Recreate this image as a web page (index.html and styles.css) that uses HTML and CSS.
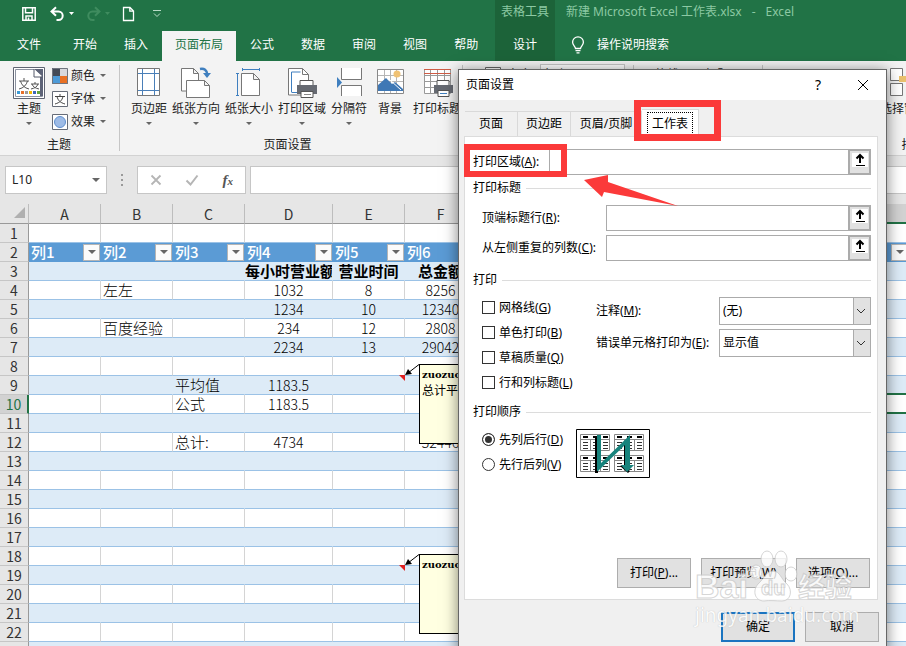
FILE: index.html
```html
<!DOCTYPE html>
<html lang="zh-CN">
<head>
    <meta charset="UTF-8">
    <meta name="viewport" content="width=device-width, initial-scale=1.0">
    <title>新建 Microsoft Excel 工作表.xlsx - Excel</title>
    <link rel="stylesheet" href="styles.css">
</head>
<body>
    <header class="header">
        <div class="header-left">
            <div class="quick-access">
                <button class="qa-btn" aria-label="保存"><svg width="16" height="16" viewBox="0 0 16 16" fill="none" stroke="#fff" stroke-width="1.5"><path d="M1.8 1.8h12.4v12.4H1.8zM4.5 2v4.7h7V2M5 14v-4h6v4M7.5 11.5V14"/></svg></button>
                <button class="qa-btn undo" aria-label="撤消"><svg width="26" height="16" viewBox="0 0 26 16"><path d="M3 5.5h6.5a4.2 4.2 0 0 1 0 8.4H7.5M7 1.2L2.5 5.5 7 9.8" fill="none" stroke="#fff" stroke-width="2"/><path d="M20 6h5l-2.5 3z" fill="#fff"/></svg></button>
                <button class="qa-btn redo" aria-label="恢复"><svg width="26" height="16" viewBox="0 0 26 16"><path d="M14 5.5H7.5a4.2 4.2 0 0 0 0 8.4H9.5M10 1.2l4.5 4.3L10 9.8" fill="none" stroke="#3f8c5f" stroke-width="2"/><path d="M20 6h5l-2.5 3z" fill="#3f8c5f"/></svg></button>
                <button class="qa-btn new-file" aria-label="新建"><svg width="13" height="16" viewBox="0 0 13 16" fill="none" stroke="#fff" stroke-width="1.3"><path d="M1.5 1.5h6.5l3.5 3.5v9.5h-10zM7.8 1.5V5.2h3.7"/></svg></button>
                <button class="qa-btn customize" aria-label="自定义快速访问工具栏"><svg width="10" height="8" viewBox="0 0 10 8" fill="none" stroke="#b9dcc7"><path d="M1 .5h8M2 3.5l3 3 3-3"/></svg></button>
            </div>
            <nav class="tabs">
                <button class="tab file">文件</button>
                <button class="tab">开始</button>
                <button class="tab">插入</button>
                <button class="tab active">页面布局</button>
                <button class="tab">公式</button>
                <button class="tab">数据</button>
                <button class="tab">审阅</button>
                <button class="tab">视图</button>
                <button class="tab">帮助</button>
            </nav>
        </div>
        <div class="context-tools">
            <div class="context-title">表格工具</div>
            <button class="tab">设计</button>
        </div>
        <div class="header-right">
            <div class="doc-title"><span>新建 Microsoft Excel 工作表.xlsx</span><span>-</span><span>Excel</span></div>
            <button class="tell-me"><svg width="14" height="18" viewBox="0 0 14 18" fill="none" stroke="#fff" stroke-width="1.3"><path d="M4.5 12.5c0-2-2.9-3.2-2.9-6.3a5.4 5.4 0 0 1 10.8 0c0 3.1-2.9 4.3-2.9 6.3zM4.5 14.6h5M5.5 16.8h3"/></svg>操作说明搜索</button>
        </div>
    </header>

    <section class="ribbon">
        <div class="group theme-group">
            <div class="group-body">
                <button class="big-btn">
                    <svg width="32" height="32" viewBox="0 0 32 32"><path d="M.5 .5h31v31H.5z" fill="#fff" stroke="#5f6472"/><path d="M2.5 2.5h27v27h-27z" fill="#fff" stroke="#8c92a0"/><path d="M27 9h3v20h-3zM21 2h9v8z" fill="#5d6377"/><path d="M21 2v8h8" fill="#fff" stroke="#555b6b"/><path d="M6 14h10M11 11v3M7.5 14c1 4 4 7 8.5 8M14.5 14c-1 4-4 7-8.5 8M18 17h8M22 15v2M19 17c1 3 3 4 7 5M25 17c-1 3-3 4-7 5" fill="none" stroke="#555"/><path d="M4 24h3v3H4z" fill="#3b9bd6"/><path d="M8 24h3v3H8z" fill="#e8702a"/><path d="M12 24h3v3h-3z" fill="#9b9b9b"/><path d="M16 24h3v3h-3z" fill="#f2b800"/><path d="M20 24h3v3h-3z" fill="#3f66b8"/><path d="M24 24h3v3h-3z" fill="#63a33c"/></svg>
                    <span>主题</span><i class="caret"></i>
                </button>
                <div class="small-btns">
                    <button class="small-btn"><svg width="16" height="16"><path d="M0 0h8v8H0z" fill="#444b57"/><path d="M8 0h8v8H8z" fill="#d9d9dd"/><path d="M0 8h8v8H0z" fill="#4d9bd8"/><path d="M8 8h8v8H8z" fill="#e97124"/><path d="M.5 .5h15v15H.5z" fill="none" stroke="#70757f"/></svg>颜色<i class="caret"></i></button>
                    <button class="small-btn"><svg width="16" height="16"><path d="M.5 .5h15v15H.5z" fill="#fff" stroke="#666c78"/><path d="M3 5.5h10M8 3v2.5M5 5.5c1 4 3 6 8 7.5M11 5.5c-1 4-3 6-8 7.5" fill="none" stroke="#444"/></svg>字体<i class="caret"></i></button>
                    <button class="small-btn"><svg width="16" height="16"><path d="M.5 .5h15v15H.5z" fill="#fff" stroke="#666c78"/><circle cx="8" cy="8" r="5.5" fill="#9dbbe6" stroke="#5f8fce"/></svg>效果<i class="caret"></i></button>
                </div>
            </div>
            <div class="group-name">主题</div>
        </div>
        <div class="group setup-group">
            <div class="group-body">
                <button class="big-btn">
                    <svg width="32" height="32" viewBox="0 0 32 32" fill="none"><path d="M4.5 1.5h22v27h-22z" fill="#fff" stroke="#777"/><path d="M9.5 2v26M21.5 2v26M5 6.5h21M5 23.5h21" stroke="#4a7fb8"/></svg>
                    <span>页边距</span><i class="caret"></i>
                </button>
                <button class="big-btn">
                    <svg width="32" height="32" viewBox="0 0 32 32" fill="#fff" stroke="#777"><path d="M1.5 1.5h12l5 5V24h-17zM13.5 1.5v5h5"/><path d="M6.5 13.5h18l5 5v12h-23zM24.5 13.5v5h5"/><path d="M20 2c4-1 7 1 7.5 6" fill="none" stroke="#3f7fbf" stroke-width="2.5"/><path d="M23 6h8l-4 5z" fill="#3f7fbf" stroke="none"/></svg>
                    <span>纸张方向</span><i class="caret"></i>
                </button>
                <button class="big-btn">
                    <svg width="32" height="32" viewBox="0 0 32 32" fill="none" stroke="#3f7fbf"><path d="M8.5 6.5h12l6 6v16h-18zM20.5 6.5v6h6" fill="#fff" stroke="#777"/><path d="M9 2.5h18M9.5 1v3M26.5 1v3M4.5 7v21M3 6.5h3M3 28.5h3"/></svg>
                    <span>纸张大小</span><i class="caret"></i>
                </button>
                <button class="big-btn">
                    <svg width="32" height="32" viewBox="0 0 32 32" fill="none" stroke="#777"><path d="M2.5 1.5h14l6 6V28h-20z" fill="#fff"/><path d="M16.5 1.5v6h6"/><path d="M5.5 25V5h9M5.5 25.5h6" stroke="#3f7fbf"/><path d="M14 13.5h13V20H14z" fill="#fff" stroke="#555"/><path d="M11 18h20v9H11z" fill="#666a72" stroke="none"/><path d="M15 24.5h12v6H15z" fill="#fff" stroke="#555"/><path d="M18 27.5h7" stroke="#888"/></svg>
                    <span>打印区域</span><i class="caret"></i>
                </button>
                <button class="big-btn">
                    <svg width="32" height="32" viewBox="0 0 32 32" fill="none" stroke="#777"><path d="M8.5 1v11.5h20V1M8.5 29V18.5h20V29" fill="#fff"/><path d="M4 10l5 5.5L4 21z" fill="#3f7fbf" stroke="none"/></svg>
                    <span>分隔符</span><i class="caret"></i>
                </button>
                <button class="big-btn">
                    <svg width="32" height="32" viewBox="0 0 32 32" fill="none"><path d="M3.5 2.5h26v24h-26z" fill="#fff" stroke="#888"/><path d="M4 8.5h25M4 14.5h25M10.5 3v23M16.5 3v23M22.5 3v23" stroke="#b6b6b6"/><circle cx="23" cy="7" r="3.5" fill="#f0c274"/><path d="M4 22v-4l8-7 6 6 3-2 8 7v2H4z" fill="#3f78b5"/><path d="M16 13l11 10" stroke="#fff"/></svg>
                    <span>背景</span>
                </button>
                <button class="big-btn">
                    <svg width="32" height="32" viewBox="0 0 32 32" fill="none" stroke="#999"><path d="M3.5 2.5h26v24h-26z" fill="#fff"/><path d="M4 8.5h26M4 14.5h26M4 20.5h26M9.5 3v23M16.5 3v23M23.5 3v23"/><path d="M3 2.5h27M3 6.5h27" stroke="#cf5c45"/><path d="M16 13.5h12V20H16z" fill="#fff" stroke="#555"/><path d="M13 18h19v8H13z" fill="#666a72" stroke="none"/><path d="M17 23.5h11v6H17z" fill="#fff" stroke="#555"/><path d="M19 26.5h7" stroke="#3f7fbf"/></svg>
                    <span>打印标题</span>
                </button>
            </div>
            <div class="group-name">页面设置</div>
        </div>
        <div class="group scale-group">
            <svg width="16" height="16"><path d="M.5 2.5h15v12H.5z" fill="#fff" stroke="#666"/></svg>
            <label for="scaleWidth">宽度:</label>
            <select id="scaleWidth"><option>自动</option></select>
        </div>
        <div class="group options-group"><span>网格线</span><span>标题</span></div>
        <div class="group arrange-group">
            <div class="group-body">
                <button class="big-btn">
                    <svg width="32" height="32" viewBox="0 0 32 32" fill="#fff" stroke="#777"><path d="M2.5 1.5h12v12h-12zM2.5 16.5h12v12h-12z"/><path d="M11 9h19v12h-8v-6H11z" fill="#eac16e" stroke="none"/></svg>
                    <span>选择窗格</span>
                </button>
            </div>
            <div class="group-name">排列</div>
        </div>
    </section>

    <section class="formula-bar">
        <div class="name-box"><input type="text" aria-label="名称框" value="L10"><i class="caret"></i></div>
        <div class="dots"><i></i><i></i><i></i></div>
        <div class="formula-btns">
            <button aria-label="取消"><svg width="12" height="12"><path d="M1.5 1.5l9 9M10.5 1.5l-9 9" stroke="#b5b5b5" stroke-width="1.8"/></svg></button>
            <button aria-label="输入"><svg width="14" height="12"><path d="M1.5 6.5l4 4 7-9" fill="none" stroke="#b5b5b5" stroke-width="2"/></svg></button>
            <button class="fx" aria-label="插入函数">f<small>x</small></button>
        </div>
        <input class="formula-input" type="text" aria-label="编辑栏">
    </section>

    <main class="sheet">
        <table class="grid" id="grid"></table>
    </main>

    <div class="dialog" role="dialog" aria-labelledby="dialogTitle">
        <div class="dialog-title">
            <span id="dialogTitle">页面设置</span>
            <button class="help" aria-label="帮助">?</button>
            <button aria-label="关闭"><svg width="12" height="12"><path d="M1 1l10 10M11 1L1 11" stroke="#000"/></svg></button>
        </div>
        <div class="dialog-tabs">
            <button class="dialog-tab">页面</button>
            <button class="dialog-tab">页边距</button>
            <button class="dialog-tab wide">页眉/页脚</button>
            <button class="dialog-tab selected"><span>工作表</span></button>
        </div>
        <form class="panel">
            <div class="range-row">
                <label for="printArea">打印区域(<u>A</u>):</label>
                <div class="range-input area"><input type="text" id="printArea"><button type="button" aria-label="选择区域"><svg width="16" height="14"><path d="M0 0h16v14H0z" fill="#fff"/><path d="M8 2v8M4.5 5.5L8 2l3.5 3.5" fill="none" stroke="#000" stroke-width="2"/><path d="M4 12.5h9" stroke="#000"/></svg></button></div>
            </div>
            <h2 class="section">打印标题</h2>
            <div class="range-row indent">
                <label for="titleRows">顶端标题行(<u>R</u>):</label>
                <div class="range-input"><input type="text" id="titleRows"><button type="button" aria-label="选择行"><svg width="16" height="14"><path d="M0 0h16v14H0z" fill="#fff"/><path d="M8 2v8M4.5 5.5L8 2l3.5 3.5" fill="none" stroke="#000" stroke-width="2"/><path d="M4 12.5h9" stroke="#000"/></svg></button></div>
            </div>
            <div class="range-row indent">
                <label for="titleCols">从左侧重复的列数(<u>C</u>):</label>
                <div class="range-input"><input type="text" id="titleCols"><button type="button" aria-label="选择列"><svg width="16" height="14"><path d="M0 0h16v14H0z" fill="#fff"/><path d="M8 2v8M4.5 5.5L8 2l3.5 3.5" fill="none" stroke="#000" stroke-width="2"/><path d="M4 12.5h9" stroke="#000"/></svg></button></div>
            </div>
            <h2 class="section">打印</h2>
            <div class="print-options">
                <div class="choices">
                    <label><input type="checkbox">网格线(<u>G</u>)</label>
                    <label><input type="checkbox">单色打印(<u>B</u>)</label>
                    <label><input type="checkbox">草稿质量(<u>Q</u>)</label>
                    <label><input type="checkbox">行和列标题(<u>L</u>)</label>
                </div>
                <div class="selects">
                    <div class="select-row">
                        <label for="comments">注释(<u>M</u>):</label>
                        <select id="comments"><option>(无)</option></select>
                    </div>
                    <div class="select-row">
                        <label for="errors">错误单元格打印为(<u>E</u>):</label>
                        <select id="errors"><option>显示值</option></select>
                    </div>
                </div>
            </div>
            <h2 class="section">打印顺序</h2>
            <div class="order">
                <div class="choices">
                    <label><input type="radio" name="order" checked>先列后行(<u>D</u>)</label>
                    <label><input type="radio" name="order">先行后列(<u>V</u>)</label>
                </div>
                <svg class="order-preview" width="74" height="49" viewBox="0 0 74 49">
                    <defs>
                        <g id="sheetIcon">
                            <path d="M.5 .5h29v16H.5z" fill="#fff" stroke="#888"/>
                            <path d="M10.5 6v11M20.5 6v11M1 5.5h29" stroke="#888"/>
                            <path d="M3 3h5M13 3h5M23 3h5" stroke="#000" stroke-width="2"/>
                            <path d="M3 8.5h5M3 11.5h5M3 14.5h5M13 8.5h5M13 11.5h5M13 14.5h5M23 8.5h5M23 11.5h5M23 14.5h5" stroke="#333"/>
                        </g>
                    </defs>
                    <path d="M.5 .5h73v48H.5z" fill="#fff" stroke="#000"/>
                    <use href="#sheetIcon" x="4" y="5"/><use href="#sheetIcon" x="38" y="5"/>
                    <use href="#sheetIcon" x="4" y="26"/><use href="#sheetIcon" x="38" y="26"/>
                    <path d="M19 8h3v36h-3zM48 14h3v22h-3zM44 37l8 7 2-2-7-6z" fill="#000"/>
                    <path d="M21 6h4v28L54 6v30h4l-7 7-6-7h4V16L22 42h-1z" fill="#17837c"/>
                </svg>
            </div>
            <div class="panel-btns">
                <button type="button" class="btn">打印(<u>P</u>)...</button>
                <button type="button" class="btn preview">打印预览(<u>W</u>)</button>
                <button type="button" class="btn">选项(<u>O</u>)...</button>
            </div>
        </form>
        <div class="dialog-btns">
            <button class="btn primary">确定</button>
            <button class="btn">取消</button>
        </div>

        <div class="mark mark-tab"></div>
        <div class="mark mark-area"></div>
        <svg class="mark-arrow" width="94" height="32" viewBox="0 0 94 32"><path d="M0 5l24-5v7l70 24-74-14-2 5z" fill="#fb3a3a"/></svg>

        <div class="watermark">
            <div class="wm-logo">
                <span>Bai</span>
                <div class="paw">
                    <svg width="50" height="54" viewBox="0 0 50 54" fill="#fff" stroke="#ccc"><ellipse cx="8" cy="22" rx="6" ry="7"/><ellipse cx="19" cy="9" rx="6" ry="8"/><ellipse cx="33" cy="9" rx="6" ry="8"/><ellipse cx="43" cy="24" rx="6" ry="7"/><path d="M25 21c7 0 8 8 14 13 6 6 4 17-5 17-5 0-13-1-18 0-9 0-12-10-6-17 6-5 8-13 15-13z"/></svg>
                    <b>du</b>
                </div>
                <span class="wm-cn">经验</span>
            </div>
            <div class="wm-url">jingyan.baidu.com</div>
        </div>
    </div>

    <script src="script.js"></script>
</body>
</html>
```
FILE: styles.css
```css
body {
    margin: 0;
    height: 100vh;
    display: flex;
    flex-direction: column;
    position: relative;
    overflow: hidden;
    font-family: "Noto Sans", "Noto Sans CJK SC", sans-serif;
    font-size: 12px;
    line-height: 16px;
    color: #222;
    background: #e6e6e6;
}
button, input, select {
    font: inherit;
    color: inherit;
    margin: 0;
    padding: 0;
    border: 0;
    border-radius: 0;
    box-sizing: border-box;
}
button {
    background: none;
    white-space: nowrap;
}
svg {
    display: block;
    flex: none;
}
.caret {
    border: 3px solid transparent;
    border-top-color: #666;
    border-bottom: 0;
}

/* title bar and tabs */
.header {
    display: flex;
    flex: none;
    height: 61px;
    background: #217346;
    color: #fff;
}
.header-left {
    width: 495px;
    flex: none;
}
.quick-access {
    display: flex;
    align-items: center;
    height: 31px;
    padding: 0 0 4px 21px;
    box-sizing: border-box;
}
.undo {
    margin-left: 12px;
}
.redo {
    margin-left: 10px;
}
.new-file {
    margin-left: 11px;
}
.customize {
    margin-left: 17px;
}
.tabs {
    display: flex;
    gap: 1px;
    padding-left: 4px;
}
.tab {
    height: 30px;
    padding: 0 13px 3px;
}
.tab.file {
    margin-right: 5px;
}
.tab.active {
    background: #f3f3f3;
    color: #217346;
}
.context-tools {
    flex: none;
    width: 60px;
    background: #1c6339;
    text-align: center;
}
.context-title, .doc-title {
    height: 31px;
    line-height: 24px;
    color: #8cc9a3;
    white-space: nowrap;
}
.doc-title {
    display: flex;
    gap: 10px;
}
.header-right {
    flex: 1;
    padding-left: 11px;
}
.tell-me {
    display: flex;
    align-items: center;
    gap: 12px;
    height: 30px;
    padding: 0 0 3px 5px;
}

/* ribbon */
.ribbon {
    display: flex;
    flex: none;
    height: 95px;
    box-sizing: border-box;
    overflow: hidden;
    background: #f3f3f3;
    border-bottom: 1px solid #d2d2d2;
}
.group {
    position: relative;
    display: flex;
    flex-direction: column;
    flex: none;
    box-sizing: border-box;
    margin: 4px 0;
    border-right: 1px solid #c6c6c6;
}
.group-body {
    display: flex;
    flex: 1;
    gap: 5px;
}
.group-name {
    text-align: center;
    margin-bottom: -2px;
}
.big-btn {
    display: flex;
    flex-direction: column;
    align-items: center;
    align-self: flex-start;
    min-width: 36px;
    padding-top: 2px;
}
.big-btn span {
    margin-top: 2px;
    height: 21px;
}
.theme-group {
    width: 120px;
    padding-left: 11px;
}
.theme-group .group-name {
    padding-right: 12px;
}
.small-btns {
    display: flex;
    flex-direction: column;
    margin-top: -1px;
}
.small-btn {
    display: flex;
    align-items: center;
    gap: 3px;
    height: 23px;
}
.small-btn .caret {
    margin-left: 2px;
}
.setup-group {
    padding-left: 11px;
    width: 343px;
}
.setup-group .group-name {
    padding-right: 18px;
}
.scale-group {
    width: 171px;
    flex-direction: row;
    gap: 6px;
    padding: 0 8px 0 22px;
}
.scale-group label, .options-group span {
    padding-top: 2px;
}
.scale-group select {
    flex: 1;
    height: 22px;
    margin-top: -1px;
    background: #fff;
    border: 1px solid #c6c6c6;
    appearance: none;
}
.options-group {
    width: 129px;
    flex-direction: row;
    gap: 26px;
    padding-left: 9px;
}
.arrange-group {
    width: 302px;
    padding-left: 117px;
}
.arrange-group .group-name {
    padding-right: 117px;
}

/* formula bar */
.formula-bar {
    display: flex;
    flex: none;
    height: 48px;
    padding: 10px 0 10px 5px;
    box-sizing: border-box;
}
.name-box, .formula-btns, .formula-input {
    background: #fff;
    border: 1px solid #c6c6c6;
    box-sizing: border-box;
}
.name-box {
    display: flex;
    align-items: center;
    width: 102px;
    padding: 0 6px;
}
.name-box input {
    flex: 1;
    min-width: 0;
    background: none;
}
.name-box .caret {
    border-width: 4px;
    border-bottom: 0;
}
.dots {
    display: flex;
    flex-direction: column;
    align-items: center;
    justify-content: center;
    gap: 3px;
    width: 30px;
}
.dots i {
    width: 2px;
    height: 2px;
    background: #999;
}
.formula-btns {
    display: flex;
    align-items: center;
    justify-content: space-between;
    width: 109px;
    padding: 0 12px;
}
.fx {
    font: italic bold 15px "Liberation Serif", serif;
    color: #555;
}
.fx small {
    font-size: 11px;
}
.formula-input {
    flex: 1;
    margin-left: 4px;
    border-right: 0;
}

/* worksheet */
.sheet {
    flex: 1;
    min-height: 0;
    overflow: hidden;
}
.grid {
    width: 981px;
    table-layout: fixed;
    border-collapse: separate;
    border-spacing: 0;
    font-family: "Noto Sans CJK SC", sans-serif;
    font-size: 15px;
    line-height: 18px;
    color: #000;
}
.grid th, .grid td {
    height: 19px;
    padding: 0;
    box-sizing: border-box;
    white-space: nowrap;
    font-weight: 300;
}
.grid .col-head th, .grid .row-head {
    font-size: 14px;
    font-weight: 400;
    color: #333;
}
.col-head th {
    border-right: 1px solid #bdbdbd;
    border-bottom: 1px solid #999;
}
.col-head .current {
    background: #d2d2d2;
    border-bottom: 2px solid #217346;
}
.grid .col-head .corner {
    padding: 0 3px 3px 14px;
}
.grid .row-head {
    background: #e6e6e6;
    border-right: 1px solid #999;
    border-bottom: 1px solid #c6c6c6;
}
.grid .row-head.current {
    background: #d2d2d2;
    color: #217346;
    border-right: 2px solid #217346;
}
.grid td {
    background: #fff;
    border-right: 1px solid #d4d4d4;
    border-bottom: 1px solid #9bc2e6;
    padding-left: 2px;
}
.grid .band td {
    background: #ddebf7;
    border-right-color: #ddebf7;
}
.grid .num {
    font-size: 14px;
    text-align: center;
    padding: 0;
}
.grid .bold {
    font-weight: bold;
    text-align: center;
    padding: 0;
    overflow: hidden;
}
.grid .table-head td {
    background: #5b9bd5;
    border-color: #5b9bd5;
    color: #fff;
    font-weight: 500;
}
.cell-head {
    display: flex;
    justify-content: space-between;
    align-items: center;
    height: 18px;
}
.filter {
    display: flex;
    align-items: center;
    justify-content: center;
    width: 17px;
    height: 17px;
    background: #fbfbfb;
    border: 1px solid #b5b5b5;
}
.filter .caret {
    border-width: 4px;
    border-bottom: 0;
}
.grid .above-active {
    border-bottom: 2px solid #217346;
}
.grid .active-cell {
    border-right: 2px solid #217346;
    border-bottom: 2px solid #217346;
}
.grid .has-note {
    position: relative;
}
.note-link {
    position: absolute;
    left: 65px;
    top: -12px;
    z-index: 1;
}
.note {
    position: absolute;
    left: 86px;
    top: -12px;
    z-index: 1;
    width: 108px;
    height: 80px;
    padding: 2px;
    box-sizing: border-box;
    background: #ffffe1;
    border: 1px solid #000;
    text-align: left;
    font-size: 12px;
    font-weight: 400;
    line-height: 15px;
}
.note b {
    display: block;
    font-family: "DejaVu Serif", serif;
    font-size: 10px;
    font-weight: 700;
}

/* page setup dialog */
.dialog {
    position: absolute;
    left: 458px;
    top: 69px;
    z-index: 2;
    width: 429px;
    box-sizing: border-box;
    background: #f0f0f0;
    border: 1px solid #666;
    box-shadow: 0 2px 14px rgba(0, 0, 0, 0.5);
    color: #000;
}
.dialog-title {
    display: flex;
    align-items: center;
    height: 30px;
    padding: 0 17px 0 7px;
    background: #fff;
}
.dialog-title span {
    flex: 1;
}
.dialog-title .help {
    font-size: 14px;
    margin-right: 36px;
}
.dialog-tabs {
    display: flex;
    align-items: flex-end;
    height: 36px;
    padding-left: 6px;
}
.dialog-tab {
    width: 53px;
    height: 25px;
    border: 1px solid #d9d9d9;
    border-left: 0;
    border-bottom: 0;
}
.dialog-tab.wide {
    width: 71px;
}
.dialog-tab.selected {
    width: 57px;
    height: 28px;
    margin-bottom: -1px;
    padding: 0 5px;
    background: #fff;
}
.dialog-tab.selected span {
    display: block;
    height: 22px;
    line-height: 22px;
    border: 1px dotted #000;
    border-bottom: 0;
}
.panel {
    margin: 0 8px 0 5px;
    padding: 12px 6px 11px 8px;
    background: #fff;
    border: 1px solid #dcdcdc;
}
.range-row {
    display: flex;
    align-items: center;
    justify-content: space-between;
    margin-bottom: 4px;
}
.indent {
    padding-left: 9px;
}
.range-input {
    display: flex;
    width: 265px;
    height: 26px;
    box-sizing: border-box;
    border: 1px solid #ababab;
}
.range-input.area {
    width: 322px;
}
.range-input input {
    flex: 1;
    min-width: 0;
}
.range-input button {
    display: flex;
    justify-content: center;
    width: 22px;
    padding-top: 2px;
    background: #e1e1e1;
    border: 2px solid #ababab;
    border-width: 1px 1px 1px 2px;
}
.section {
    display: flex;
    align-items: center;
    gap: 5px;
    height: 16px;
    margin: 5px 0 9px;
    font-size: 12px;
    font-weight: normal;
}
.section::after {
    content: "";
    flex: 1;
    border-top: 1px solid #dcdcdc;
}
.indent + .section {
    margin: 11px 0 10px;
}
.print-options, .order {
    display: flex;
    padding-left: 9px;
    margin-top: -3px;
}
.choices {
    display: flex;
    flex-direction: column;
}
.print-options .choices {
    width: 114px;
}
.order .choices {
    width: 94px;
}
.choices label {
    display: flex;
    align-items: center;
    height: 25px;
    white-space: nowrap;
}
.choices input {
    appearance: none;
    flex: none;
    width: 13px;
    height: 13px;
    margin-right: 4px;
    border: 1px solid #333;
    background: #fff;
}
.choices input[type="radio"] {
    border-radius: 50%;
}
.choices input[type="radio"]:checked {
    background: #333;
    box-shadow: inset 0 0 0 2px #fff;
}
.selects {
    flex: 1;
    display: flex;
    flex-direction: column;
    gap: 4px;
    padding-top: 2px;
}
.select-row {
    display: flex;
    align-items: center;
    justify-content: space-between;
}
.select-row select {
    appearance: none;
    width: 152px;
    height: 28px;
    padding-left: 3px;
    border: 1px solid #ababab;
    background: #fff url("data:image/svg+xml,%3Csvg xmlns='http://www.w3.org/2000/svg' width='17' height='26'%3E%3Cpath d='M0 0h17v26H0z' fill='%23e1e1e1'/%3E%3Cpath d='M.5 0v26' stroke='%23ababab'/%3E%3Cpath d='M4 11l4 4 4-4' fill='none' stroke='%23333'/%3E%3C/svg%3E") no-repeat right center;
}
.print-options + .section {
    margin: 9px 0 10px;
}
.order-preview {
    margin-top: 2px;
}
.panel-btns, .dialog-btns {
    display: flex;
    justify-content: flex-end;
    gap: 10px;
}
.panel-btns {
    margin-top: 80px;
    padding-right: 1px;
}
.dialog-btns {
    padding: 12px 7px 11px;
}
.btn {
    width: 74px;
    height: 30px;
    background: #e1e1e1;
    border: 1px solid #adadad;
}
.btn.preview {
    width: 85px;
}
.btn.primary {
    border: 2px solid #1a74c0;
}

/* red highlights */
.mark {
    position: absolute;
    box-sizing: border-box;
    border: 6px solid #fb3a3a;
}
.mark-tab {
    left: 175px;
    top: 30px;
    width: 87px;
    height: 41px;
    border-width: 7px;
}
.mark-area {
    left: 5px;
    top: 74px;
    width: 103px;
    height: 33px;
}
.mark-arrow {
    position: absolute;
    left: 125px;
    top: 105px;
}

/* watermark */
.watermark {
    position: absolute;
    left: 236px;
    top: 478px;
    opacity: 0.8;
    color: #fff;
    pointer-events: none;
}
.wm-logo {
    display: flex;
    align-items: flex-end;
    height: 56px;
    font: bold 34px/36px "Liberation Sans", sans-serif;
    -webkit-text-stroke: 1px #ccc;
}
.paw {
    position: relative;
    width: 50px;
    height: 54px;
}
.paw b {
    position: absolute;
    left: 13px;
    bottom: -2px;
    font-size: 20px;
}
.wm-logo .wm-cn {
    font-family: "Noto Sans CJK SC", sans-serif;
    font-size: 27px;
}
.wm-url {
    font-size: 19px;
    line-height: 22px;
    text-shadow: 0 0 1px #aaa;
}
```
FILE: script.js
```js
const columns = ['A', 'B', 'C', 'D', 'E', 'F', 'G', 'H', 'I', 'J', 'K', 'L', 'M'];
const wide = 'D';
const cells = {
    D3: '每小时营业额', E3: '营业时间', F3: '总金额',
    B4: '左左', D4: 1032, E4: 8, F4: 8256,
    D5: 1234, E5: 10, F5: 12340,
    B6: '百度经验', D6: 234, E6: 12, F6: 2808,
    D7: 2234, E7: 13, F7: 29042,
    C9: '平均值', D9: 1183.5,
    C10: '公式', D10: 1183.5,
    C12: '总计:', D12: 4734, F12: 52446
};
const notes = { E9: '总计平均', E19: '' };

const grid = document.getElementById('grid');
let html = '<colgroup><col style="width:29px">';
columns.forEach(c => {
    html += `<col style="width:${c === wide ? 88 : 72}px">`;
});
html += '</colgroup><tr class="col-head"><th class="corner"><svg width="11" height="11"><path d="M11 0v11H0z" fill="#b0b0b0"/></svg></th>';
columns.forEach(c => {
    html += `<th class="${c === 'L' ? 'current' : ''}">${c}</th>`;
});
html += '</tr>';

for (let r = 1; r <= 24; r++) {
    const rowClass = r === 2 ? 'table-head' : (r > 2 && r % 2 ? 'band' : '');
    html += `<tr class="${rowClass}"><th class="row-head ${r === 10 ? 'current' : ''}">${r}</th>`;
    columns.forEach((c, i) => {
        const id = c + r;
        const value = cells[id] === undefined ? '' : cells[id];
        if (r === 2) {
            html += `<td><div class="cell-head">列${i + 1}<button class="filter" aria-label="筛选"><i class="caret"></i></button></div></td>`;
            return;
        }
        let cls = '';
        if (typeof value === 'number') cls = 'num';
        if (r === 3) cls = 'bold';
        if (id === 'L9') cls = 'above-active';
        if (id === 'L10') cls = 'active-cell';
        let note = '';
        if (id in notes) {
            cls = 'has-note';
            note = '<svg class="note-link" width="21" height="18"><path d="M1 11h6v6z" fill="#e02020"/><path d="M21 .5L10 9" stroke="#000"/><path d="M7 11l3-6 4 5z" fill="#000"/></svg>' +
                `<div class="note"><b>zuozuo:</b>${notes[id]}</div>`;
        }
        html += `<td class="${cls}">${value}${note}</td>`;
    });
    html += '</tr>';
}
grid.innerHTML = html;
```
